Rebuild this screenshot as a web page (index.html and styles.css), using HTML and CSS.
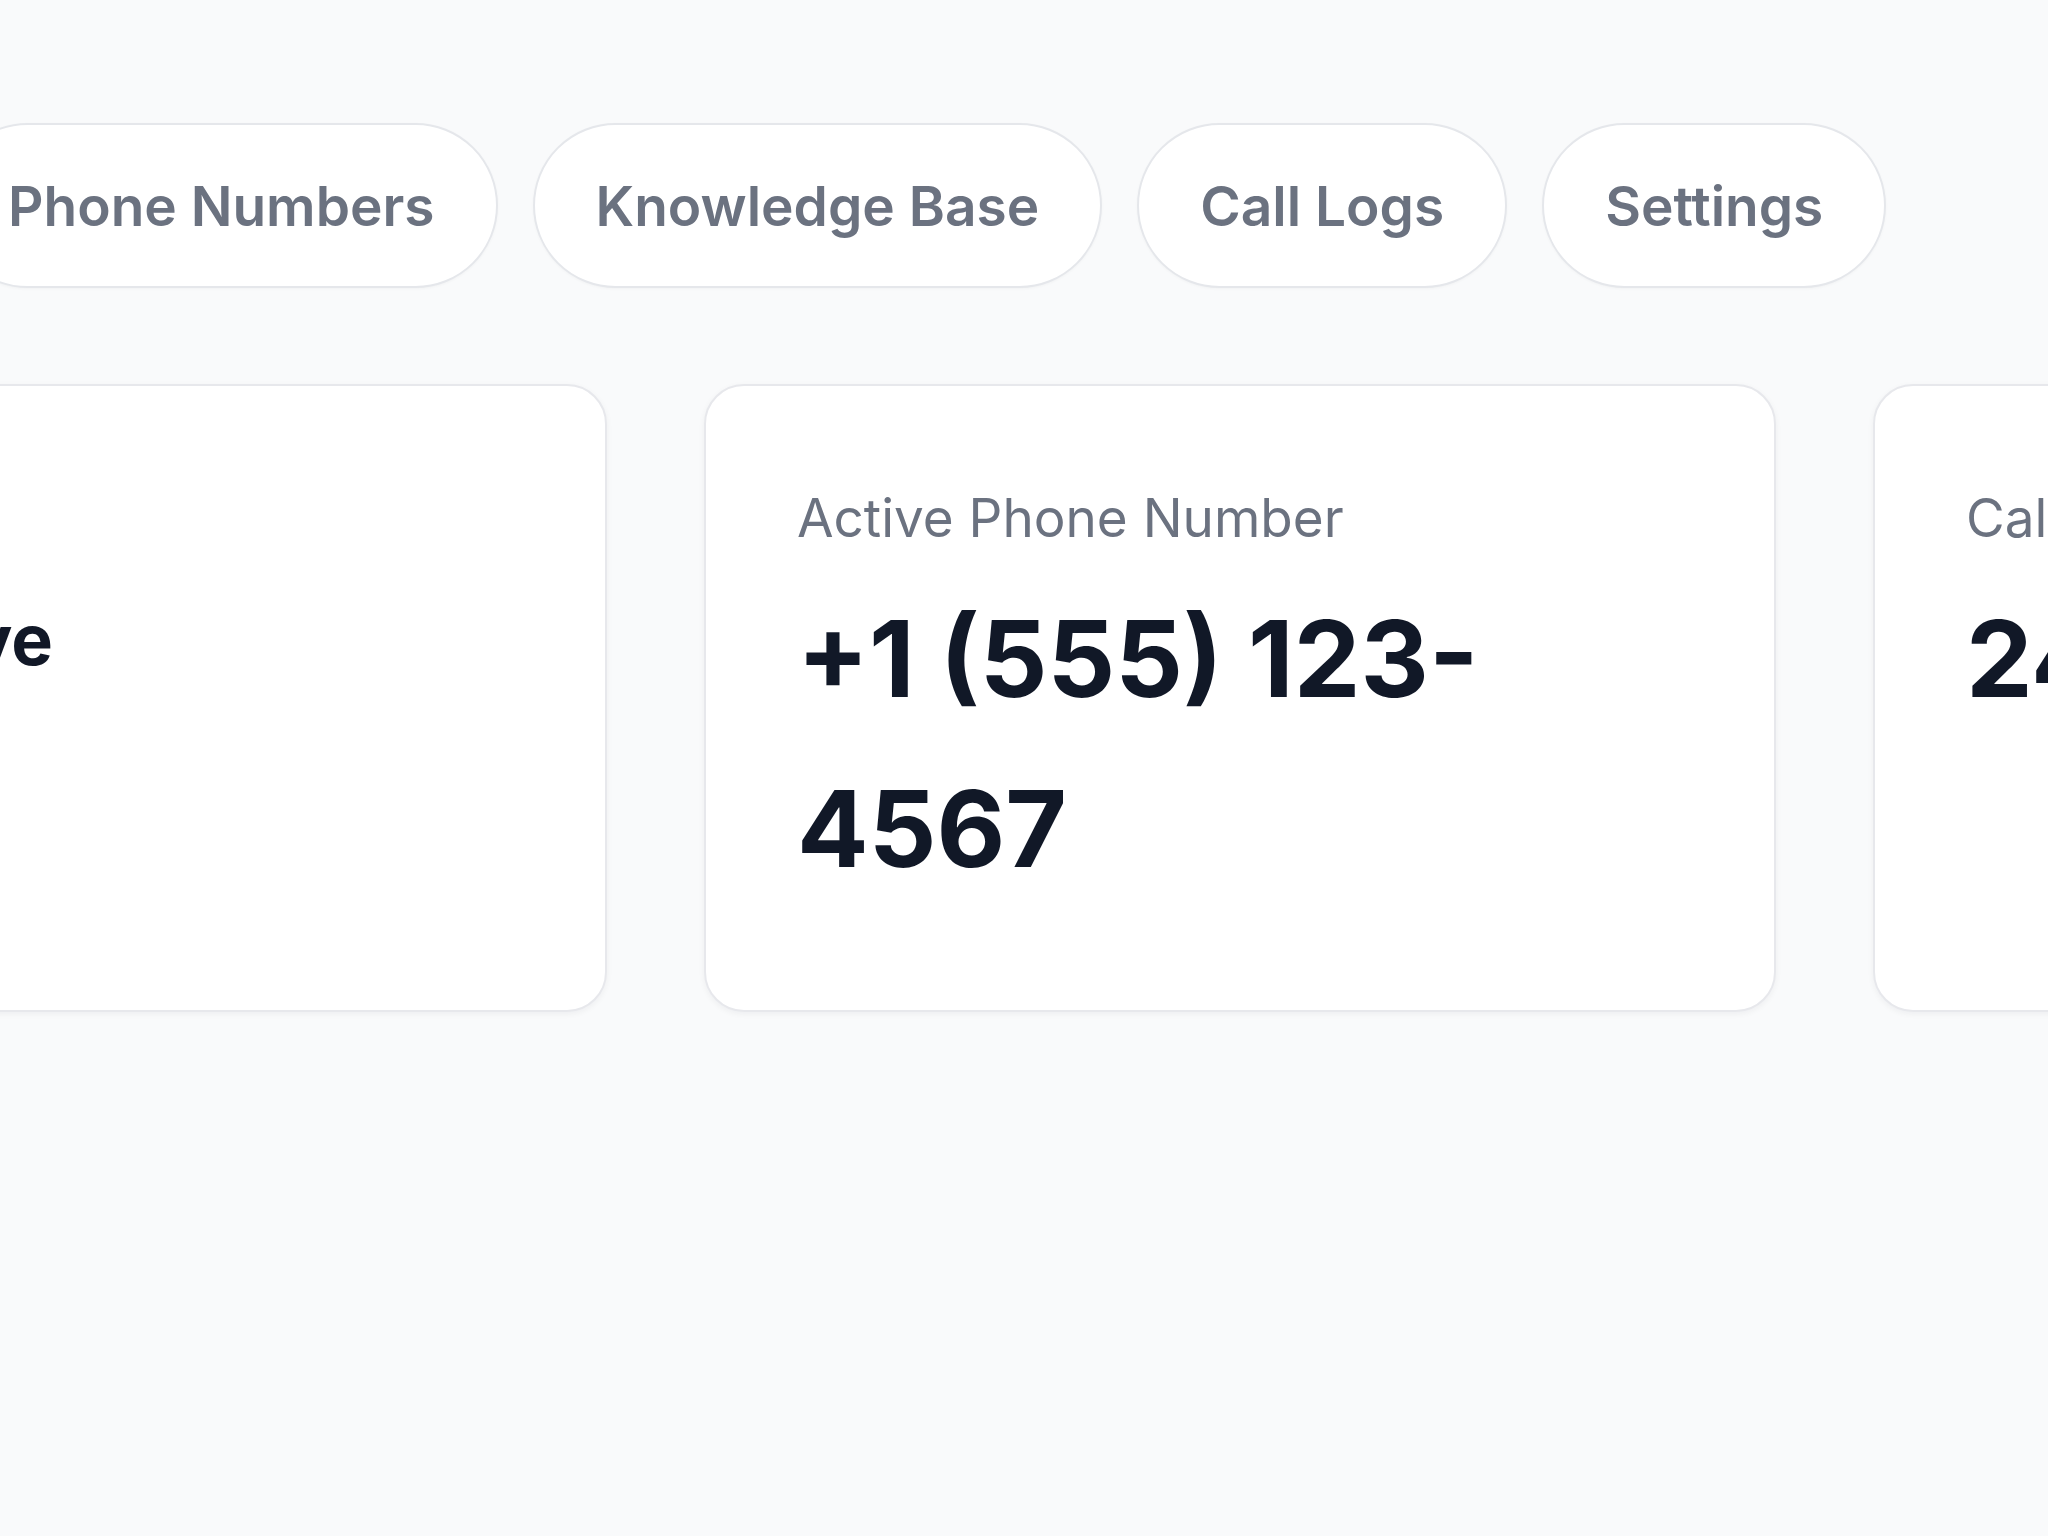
FILE: index.html
```html
<!DOCTYPE html>
<html lang="en">
<head>
<meta charset="utf-8">
<title>Agent Dashboard</title>
<link rel="stylesheet" href="styles.css">
</head>
<body>
<main class="page">
  <nav class="tabs">
    <a class="tab">Phone Numbers</a>
    <a class="tab">Knowledge Base</a>
    <a class="tab">Call Logs</a>
    <a class="tab">Settings</a>
  </nav>
  <section class="stats">
    <div class="card">
      <div class="card-label">Agent Status</div>
      <div class="status-row">
        <span class="status-dot"></span>
        <span class="status-text">Active</span>
      </div>
    </div>
    <div class="card">
      <div class="card-label">Active Phone Number</div>
      <div class="card-value">+1 (555) 123-4567</div>
    </div>
    <div class="card">
      <div class="card-label">Calls Today</div>
      <div class="card-value">248</div>
    </div>
  </section>
</main>
</body>
</html>
```

FILE: styles.css
```css
html, body {
  margin: 0;
  padding: 0;
}
body {
  background: #f9fafb;
  font-family: Inter, "Noto Sans", "Liberation Sans", sans-serif;
  overflow: hidden;
  width: 2048px;
  height: 1536px;
}
.page {
  padding-top: 123px;
}
.tabs {
  display: flex;
  gap: 35px;
  margin-left: -55px;
}
.tab {
  display: block;
  flex: none;
  background: #ffffff;
  border: 2px solid #e5e7eb;
  border-radius: 999px;
  padding: 39px 61px 38px;
  font-size: 55px;
  line-height: 84px;
  font-weight: 600;
  color: #6b7280;
  white-space: nowrap;
  box-shadow: 0 1px 3px rgba(17, 24, 39, 0.03);
}
.stats {
  display: grid;
  grid-template-columns: repeat(3, 1072px);
  gap: 97px;
  margin-top: 96px;
  margin-left: -465px;
}
.card {
  background: #ffffff;
  border: 2px solid #e7e8ec;
  border-radius: 40px;
  padding: 96px 91px;
  box-shadow: 0 2px 6px rgba(17, 24, 39, 0.05);
}
.card-label {
  font-size: 53px;
  line-height: 72px;
  color: #6b7280;
  font-weight: 400;
}
.card-value {
  margin-top: 20px;
  font-size: 106px;
  line-height: 170px;
  font-weight: 700;
  color: #111827;
}
.status-row {
  margin-top: 20px;
  display: flex;
  align-items: center;
  gap: 24px;
  height: 131px;
}
.status-dot {
  width: 28px;
  height: 28px;
  border-radius: 50%;
  background: #22c55e;
  margin-left: 154px;
}
.status-text {
  font-size: 70px;
  line-height: 131px;
  font-weight: 700;
  color: #111827;
}
```
